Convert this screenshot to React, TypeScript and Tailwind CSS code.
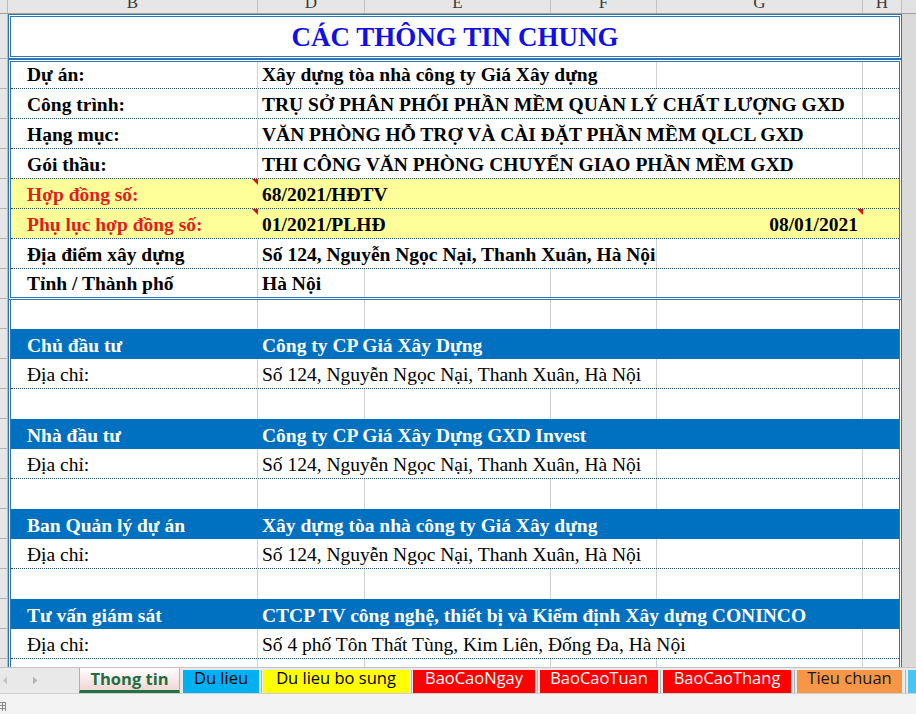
import React from "react";

type Lines = [boolean, boolean, boolean, boolean, boolean];

const gl = (on: boolean) => (on ? "border-r border-[#d0d0d0]" : "");

function Row({
  h,
  bg = "",
  dotted = false,
  label = "",
  value = "",
  labelCls = "",
  valueCls = "",
  lines,
  date,
  triB = false,
  triG = false,
}: {
  h: string;
  bg?: string;
  dotted?: boolean;
  label?: string;
  value?: string;
  labelCls?: string;
  valueCls?: string;
  lines: Lines;
  date?: string;
  triB?: boolean;
  triG?: boolean;
}) {
  return (
    <div
      className={`flex shrink-0 ${h} ${bg} ${
        dotted ? "border-b border-dotted border-[#245070]" : ""
      }`}
    >
      <div
        className={`relative w-[247px] shrink-0 min-w-0 flex items-end pl-[16px] pb-[2px] ${gl(
          lines[0]
        )}`}
      >
        <span className={`whitespace-nowrap leading-[22px] ${labelCls}`}>
          {label}
        </span>
        {triB && (
          <span className="absolute top-0 right-0 w-0 h-0 border-l-[6px] border-l-transparent border-t-[6px] border-t-[#e01010]" />
        )}
      </div>
      <div
        className={`w-[107px] shrink-0 min-w-0 flex items-end pl-[4px] pb-[2px] ${gl(
          lines[1]
        )}`}
      >
        <span className={`whitespace-nowrap leading-[22px] ${valueCls}`}>
          {value}
        </span>
      </div>
      <div className={`w-[186px] shrink-0 ${gl(lines[2])}`} />
      <div className={`w-[106px] shrink-0 ${gl(lines[3])}`} />
      <div
        className={`relative w-[206px] shrink-0 min-w-0 flex items-end justify-end pr-[5px] pb-[2px] ${gl(
          lines[4]
        )}`}
      >
        {date && (
          <span className="whitespace-nowrap leading-[22px] font-bold">
            {date}
          </span>
        )}
        {triG && (
          <span className="absolute top-0 right-0 w-0 h-0 border-l-[6px] border-l-transparent border-t-[6px] border-t-[#e01010]" />
        )}
      </div>
      <div className="w-[36px] shrink-0" />
    </div>
  );
}

const ALL: Lines = [true, true, true, true, true];
const NONE: Lines = [false, false, false, false, false];

function Block({
  title,
  company,
  address,
  addrLines,
}: {
  title: string;
  company: string;
  address: string;
  addrLines: Lines;
}) {
  return (
    <>
      <Row
        h="h-[30px]"
        bg="bg-[#0070c0]"
        label={title}
        value={company}
        labelCls="font-bold text-white"
        valueCls="font-bold text-white"
        lines={NONE}
      />
      <Row
        h="h-[30px]"
        dotted
        label="Địa chỉ:"
        value={address}
        lines={addrLines}
      />
      <Row h="h-[30px]" lines={ALL} />
    </>
  );
}

function HeaderCell({ w, letter }: { w: string; letter: string }) {
  return (
    <div
      className={`${w} shrink-0 flex justify-center border-r border-[#c2c2c2]`}
    >
      <span className="leading-[18px] -mt-[6px]">{letter}</span>
    </div>
  );
}

function Tab({
  w,
  cls,
  children,
}: {
  w: string;
  cls: string;
  children: React.ReactNode;
}) {
  return (
    <div
      className={`${w} h-[23px] shrink-0 flex items-start justify-center leading-[16px] whitespace-nowrap ${cls}`}
    >
      {children}
    </div>
  );
}

function Sep({ w }: { w: string }) {
  return (
    <div className={`${w} h-[23px] shrink-0 flex justify-center`}>
      <div className="w-px h-full bg-[#b4b4b4]" />
    </div>
  );
}

export default function App() {
  return (
    <div className="w-[916px] h-[714px] overflow-hidden bg-white flex flex-col font-['Liberation_Serif','Times_New_Roman',serif] text-[19.5px] text-black">
      {/* column header */}
      <div className="flex h-[14px] shrink-0 bg-[#e6e6e6] border-b border-[#a0a0a0] overflow-hidden text-[17px] text-[#3a3a3a]">
        <div className="w-[8px] shrink-0 border-r border-[#bcbcbc]" />
        <HeaderCell w="w-[250px]" letter="B" />
        <HeaderCell w="w-[107px]" letter="D" />
        <HeaderCell w="w-[186px]" letter="E" />
        <HeaderCell w="w-[106px]" letter="F" />
        <HeaderCell w="w-[206px]" letter="G" />
        <HeaderCell w="w-[39px]" letter="H" />
        <div className="flex-1 bg-[#e2e2e2]" />
      </div>

      {/* sheet area */}
      <div className="flex h-[653px] shrink-0 overflow-hidden">
        {/* row headers */}
        <div className="w-[8px] shrink-0 bg-[#e6e6e6] border-r border-[#bcbcbc] flex flex-col">
          <div className="h-[45px] shrink-0 border-b border-[#b4b4b4]" />
          {Array.from({ length: 21 }).map((_, i) => (
            <div
              key={i}
              className="h-[30px] shrink-0 border-b border-[#b4b4b4]"
            />
          ))}
        </div>

        {/* sheet */}
        <div className="w-[894px] shrink-0 flex flex-col">
          {/* title */}
          <div className="h-[45px] shrink-0 border-[3px] border-double border-[#2f75b5] flex items-center justify-center">
            <span className="text-[27px] leading-[31px] font-bold text-[#1010e6] mt-[1px]">
              CÁC THÔNG TIN CHUNG
            </span>
          </div>

          {/* general info box */}
          <div className="h-[241px] shrink-0 border-[3px] border-double border-[#2f75b5] flex flex-col font-bold">
            <Row
              h="h-[27px]"
              dotted
              label="Dự án:"
              value="Xây dựng tòa nhà công ty Giá Xây dựng"
              lines={[true, false, false, true, true]}
            />
            <Row
              h="h-[30px]"
              dotted
              label="Công trình:"
              value="TRỤ SỞ PHÂN PHỐI PHẦN MỀM QUẢN LÝ CHẤT LƯỢNG GXD"
              lines={[true, false, false, false, true]}
            />
            <Row
              h="h-[30px]"
              dotted
              label="Hạng mục:"
              value="VĂN PHÒNG HỖ TRỢ VÀ CÀI ĐẶT PHẦN MỀM QLCL GXD"
              lines={[true, false, false, false, true]}
            />
            <Row
              h="h-[30px]"
              dotted
              label="Gói thầu:"
              value="THI CÔNG VĂN PHÒNG CHUYỂN GIAO PHẦN MỀM GXD"
              lines={[true, false, false, false, true]}
            />
            <Row
              h="h-[30px]"
              dotted
              bg="bg-[#ffff99]"
              label="Hợp đồng số:"
              labelCls="text-[#e31c1c]"
              value="68/2021/HĐTV"
              lines={NONE}
              triB
            />
            <Row
              h="h-[30px]"
              dotted
              bg="bg-[#ffff99]"
              label="Phụ lục hợp đồng số:"
              labelCls="text-[#e31c1c]"
              value="01/2021/PLHĐ"
              lines={NONE}
              date="08/01/2021"
              triB
              triG
            />
            <Row
              h="h-[30px]"
              dotted
              label="Địa điểm xây dựng"
              value="Số 124, Nguyễn Ngọc Nại, Thanh Xuân, Hà Nội"
              lines={[true, false, false, true, true]}
            />
            <Row
              h="h-[28px]"
              label="Tỉnh / Thành phố"
              value="Hà Nội"
              lines={ALL}
            />
          </div>

          {/* parties */}
          <div className="shrink-0 border-x-[3px] border-double border-[#2f75b5] flex flex-col">
            <Row h="h-[29px]" lines={ALL} />
            <Block
              title="Chủ đầu tư"
              company="Công ty CP Giá Xây Dựng"
              address="Số 124, Nguyễn Ngọc Nại, Thanh Xuân, Hà Nội"
              addrLines={[true, false, false, true, true]}
            />
            <Block
              title="Nhà đầu tư"
              company="Công ty CP Giá Xây Dựng GXD Invest"
              address="Số 124, Nguyễn Ngọc Nại, Thanh Xuân, Hà Nội"
              addrLines={[true, false, false, true, true]}
            />
            <Block
              title="Ban Quản lý dự án"
              company="Xây dựng tòa nhà công ty Giá Xây dựng"
              address="Số 124, Nguyễn Ngọc Nại, Thanh Xuân, Hà Nội"
              addrLines={[true, false, false, true, true]}
            />
            <Block
              title="Tư vấn giám sát"
              company="CTCP TV công nghệ, thiết bị và Kiểm định Xây dựng CONINCO"
              address="Số 4 phố Tôn Thất Tùng, Kim Liên, Đống Đa, Hà Nội"
              addrLines={[true, false, false, false, true]}
            />
          </div>
        </div>

        {/* vertical scrollbar strip */}
        <div className="flex-1 bg-[#dadada]" />
      </div>

      {/* sheet tabs */}
      <div className="flex h-[26px] shrink-0 items-end bg-[#e9e9e9] border-t border-[#c4c4c4] font-['Open_Sans',sans-serif] text-[16.5px]">
        <div className="w-[79px] h-full shrink-0 flex items-center">
          <svg width="6" height="9" viewBox="0 0 6 9" className="ml-[2px]">
            <path d="M5 0.5 L0.8 4.5 L5 8.5 Z" fill="#c6c6c6" />
          </svg>
          <svg width="6" height="9" viewBox="0 0 6 9" className="ml-[24px]">
            <path d="M1 0.5 L5.2 4.5 L1 8.5 Z" fill="#b4b4b4" />
          </svg>
        </div>
        <div className="w-[101px] h-[25px] shrink-0 flex items-start justify-center pt-[3px] leading-[16px] bg-linear-to-b from-white to-[#f0d6d5] border-x border-[#b0b0b0] border-b-[3px] border-b-[#217346] font-bold text-[#1f6e3f]">
          Thong tin
        </div>
        <div className="w-[3px] shrink-0" />
        <Tab w="w-[76px]" cls="bg-[#00b0f0] text-black">
          Du lieu
        </Tab>
        <Sep w="w-[4px]" />
        <Tab w="w-[146px]" cls="bg-[#ffff00] text-black">
          Du lieu bo sung
        </Tab>
        <Sep w="w-[4px]" />
        <Tab w="w-[122px]" cls="bg-[#ff0000] text-white">
          BaoCaoNgay
        </Tab>
        <Sep w="w-[5px]" />
        <Tab w="w-[118px]" cls="bg-[#ff0000] text-white">
          BaoCaoTuan
        </Tab>
        <Sep w="w-[5px]" />
        <Tab w="w-[128px]" cls="bg-[#ff0000] text-white">
          BaoCaoThang
        </Tab>
        <Sep w="w-[6px]" />
        <Tab w="w-[105px]" cls="bg-[#f79646] text-[#1a1a1a]">
          Tieu chuan
        </Tab>
        <Sep w="w-[6px]" />
        <div className="flex-1 h-[23px] bg-[#45c6f5]" />
      </div>

      {/* status bar */}
      <div className="flex-1 bg-[#f3f3f3] border-t border-[#cfcfcf] flex items-end">
        <svg width="8" height="12" viewBox="0 0 8 12" className="mb-[1px]">
          <rect x="0" y="1" width="6" height="1" fill="#8a8a8a" />
          <rect x="0" y="4" width="6" height="1" fill="#8a8a8a" />
          <rect x="0" y="7" width="6" height="1" fill="#8a8a8a" />
          <rect x="2" y="1" width="1" height="9" fill="#8a8a8a" />
          <rect x="5" y="1" width="1" height="9" fill="#8a8a8a" />
        </svg>
      </div>
    </div>
  );
}
